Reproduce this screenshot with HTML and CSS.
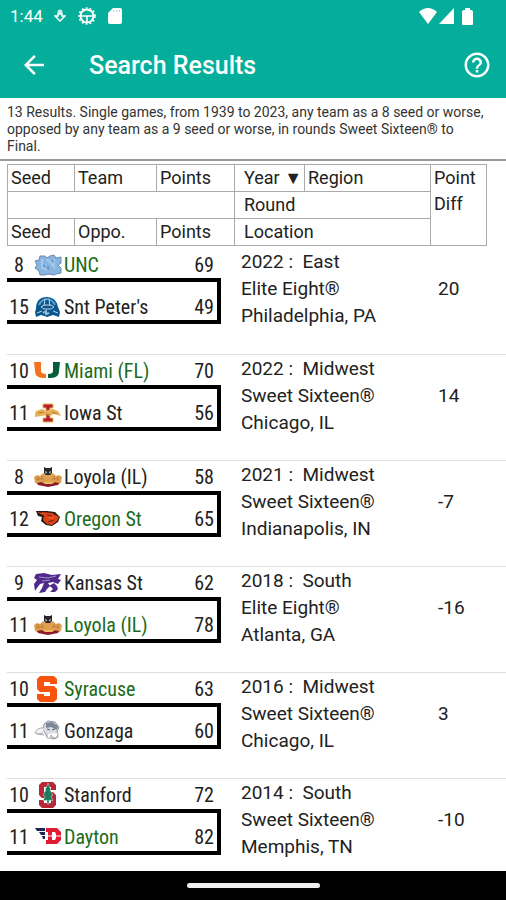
FILE: index.html
```html
<!DOCTYPE html>
<html lang="en">
<head>
    <meta charset="UTF-8">
    <meta name="viewport" content="width=device-width, initial-scale=1.0">
    <title>Search Results</title>
    <link rel="stylesheet" href="styles.css">
</head>
<body>
    <svg class="defs" aria-hidden="true">
        <symbol id="wolf" viewBox="0 0 28 26">
            <path d="M10 3l2 1h4l2-1v6l-2 3h-4l-2-3z" fill="#26262b"/>
            <path d="M11 7l2 1-1 2zM17 7l-2 1 1 2z" fill="#ddd"/>
            <path d="M0 13l3-2 3 1 3-3 3 2h4l3-2 3 3 3-1 3 2-1 6-4 2H6l-5-2z" fill="#dfa051"/>
            <path d="M2 15h8M18 15h7M4 12v5M8 12v3M20 12v3M24 12v5" stroke="#c07a38" fill="none"/>
            <path d="M3 19l5-1 6 1 6-1 5 1-1 2-10 2-10-2z" fill="#8c1c2c"/>
            <path d="M8 18h13l-3 2h-7z" fill="#eebb62"/>
        </symbol>
    </svg>

    <header>
        <div class="status">
            <span class="clock">1:44</span>
            <svg width="12" height="18" viewBox="0 0 12 18"><circle cx="6" cy="5" r="2.5" fill="#fff" opacity=".8"/><path d="M1 9l5 5 5-5H8V7H4v2z" fill="none" stroke="#fff" stroke-width="1.5"/></svg>
            <svg width="18" height="18" viewBox="0 0 18 18"><circle cx="9" cy="9" r="6.5" fill="none" stroke="#fff" stroke-width="2"/><circle cx="9" cy="9" r="8" fill="none" stroke="#fff" stroke-width="1.5" stroke-dasharray="2 2"/><path d="M3 9h12M9 9v7" stroke="#fff" stroke-width="1.6"/></svg>
            <svg width="14" height="16" viewBox="0 0 14 16"><path d="M5 0h7q2 0 2 2v12q0 2-2 2H2q-2 0-2-2V5z" fill="#fff"/><path d="M6 2v2M9 2v2M11.500 2v2" stroke="#9bdcd3"/></svg>
            <span class="space"></span>
            <svg class="wifi" width="18" height="16" viewBox="0 0 18 16"><path d="M0 4q9-8 18 0L9 16z" fill="#fff"/></svg>
            <svg class="signal" width="15" height="16" viewBox="0 0 15 16"><path d="M15 0v16H0z" fill="#fff"/></svg>
            <svg width="11" height="17" viewBox="0 0 11 17"><path d="M3 0h5v2h1q2 0 2 2v12q0 1-1 1H1q-1 0-1-1V4q0-2 2-2h1z" fill="#fff"/></svg>
        </div>
        <div class="bar">
            <button class="icon" aria-label="Back">
                <svg width="30" height="30" viewBox="0 0 24 24"><path d="M20 11H7.830l5.590-5.590L12 4l-8 8 8 8 1.410-1.410L7.830 13H20z" fill="#fff"/></svg>
            </button>
            <h1>Search Results</h1>
            <button class="icon" aria-label="Help">
                <svg width="30" height="30" viewBox="0 0 24 24"><path d="M11 18h2v-2h-2v2zm1-16C6.480 2 2 6.480 2 12s4.480 10 10 10 10-4.480 10-10S17.520 2 12 2zm0 18c-4.410 0-8-3.590-8-8s3.590-8 8-8 8 3.590 8 8-3.590 8-8 8zm0-14c-2.210 0-4 1.790-4 4h2c0-1.100.9-2 2-2s2 .9 2 2c0 2-3 1.750-3 5h2c0-2.250 3-2.500 3-5 0-2.210-1.790-4-4-4z" fill="#fff"/></svg>
            </button>
        </div>
    </header>

    <p class="summary">13 Results. Single games, from 1939 to 2023, any team as a 8 seed or worse, opposed by any team as a 9 seed or worse, in rounds Sweet Sixteen® to Final.</p>

    <main>
        <table class="legend">
            <colgroup><col class="c-seed"><col class="c-team"><col class="c-points"><col class="c-year"><col><col class="c-diff"></colgroup>
            <tr>
                <th>Seed</th><th>Team</th><th>Points</th>
                <th class="wide"><button class="sort">Year ▼</button></th><th>Region</th>
                <th rowspan="3" class="diff-head">Point Diff</th>
            </tr>
            <tr>
                <td colspan="3"></td><th colspan="2" class="wide">Round</th>
            </tr>
            <tr>
                <th>Seed</th><th>Oppo.</th><th>Points</th><th colspan="2" class="wide">Location</th>
            </tr>
        </table>

        <table class="games">
            <tr>
                <td class="match">
                    <div class="team win"><span class="seed">8</span>
                        <svg class="logo" viewBox="0 0 28 26"><path d="M1 9l4-1 1-4h5l2 2 3-2 4-1 2 3 5-1v6l-3 2 3 3v5l-5 1-2 1-6-1-3 1H6l-1-4-4-3 2-3z" fill="#86b5e3" stroke="#6f8aa8"/><path d="M8 7v9l6 2M13 7l7 8v-8" fill="none" stroke="#a2c7eb" stroke-width="2"/><path d="M9 13l2 2M14 14v4M18 8l2 2" stroke="#5a7490"/></svg>
                        <span class="name">UNC</span><span class="points">69</span></div>
                    <div class="team opponent"><span class="seed">15</span>
                        <svg class="logo" viewBox="0 0 28 26"><path d="M2 15q0-12 11-12 9 0 11 10l2 5-1 5-6-2-6 2-6-2-5 2-1-5z" fill="#0c568e"/><path d="M5 11q3-6 8-6t8 6" fill="none" stroke="#54a1cf" stroke-width="2"/><path d="M11 5l-1 7M15 5l1 7" stroke="#c5dce9"/><path d="M7 13l3-2h7l3 2-3 2h-7zM3 19l5-2M24 19l-5-2" stroke="#b9d2e3" fill="none"/><path d="M9 19l3-2v3l3-1" stroke="#8cbbd9" stroke-width="2" fill="none"/></svg>
                        <span class="name">Snt Peter's</span><span class="points">49</span></div>
                </td>
                <td class="info">2022 :&nbsp; East<br>Elite Eight®<br>Philadelphia, PA</td>
                <td class="diff">20</td>
            </tr>
            <tr>
                <td class="match">
                    <div class="team win"><span class="seed">10</span>
                        <svg class="logo" viewBox="0 0 28 26"><path d="M0 4h7v9q0 3 5 3v4H9q-8 0-8-7z" fill="#f47321"/><path d="M19 4h7l-1 9q0 7-8 7h-3v-4q5 0 5-3z" fill="#075c3b"/></svg>
                        <span class="name">Miami (FL)</span><span class="points">70</span></div>
                    <div class="team opponent"><span class="seed">11</span>
                        <svg class="logo" viewBox="0 0 28 26"><path d="M9 4h10v4h-3v10h3v4H9v-4h3V8H9z" fill="#b41f32" stroke="#e7b84c"/><path d="M1 14l1-3 6-2 4 2 2-1 5-1 5 2 3 5-7-2-4 2-3-1-6 1-6 1z" fill="#e5b257"/><path d="M4 13l6-1M18 12l5 2M12 14l4 1" stroke="#b77833"/></svg>
                        <span class="name">Iowa St</span><span class="points">56</span></div>
                </td>
                <td class="info">2022 :&nbsp; Midwest<br>Sweet Sixteen®<br>Chicago, IL</td>
                <td class="diff">14</td>
            </tr>
            <tr>
                <td class="match">
                    <div class="team"><span class="seed">8</span>
                        <svg class="logo"><use href="#wolf"/></svg>
                        <span class="name">Loyola (IL)</span><span class="points">58</span></div>
                    <div class="team opponent win"><span class="seed">12</span>
                        <svg class="logo" viewBox="0 0 28 26"><path d="M2 5l11 0 8 1 5 5-2 5-6 4-6-1-5-4 1-4-4-1z" fill="#2a1712"/><path d="M8 6l10 1 7 4-2 4-5 4-5-1-4-4 1-4z" fill="#dc4218"/><path d="M3 6l6 1v2zM13 12l5-2 3 2-4 1z" fill="#f05a22"/><path d="M13 9l5 1M14 16l6-2" stroke="#6a2211"/></svg>
                        <span class="name">Oregon St</span><span class="points">65</span></div>
                </td>
                <td class="info">2021 :&nbsp; Midwest<br>Sweet Sixteen®<br>Indianapolis, IN</td>
                <td class="diff">-7</td>
            </tr>
            <tr>
                <td class="match">
                    <div class="team"><span class="seed">9</span>
                        <svg class="logo" viewBox="0 0 28 26"><path d="M2 4l8-1 8 2 9-1-3 5 3 1-3 4-5-2-5 1 2 3-3 3-2 3-6 1 3-5 2-5-4 1-3 4-2 3-1-7 3-4-3-2z" fill="#4f2a8a"/><path d="M15 16l5-3 3 3 1 3-3 3h-5l3-3-2-2z" fill="#4f2a8a"/><path d="M5 7l9 1 8-2M8 11l8-1" fill="none" stroke="#b8a6d6" stroke-width=".8"/></svg>
                        <span class="name">Kansas St</span><span class="points">62</span></div>
                    <div class="team opponent win"><span class="seed">11</span>
                        <svg class="logo"><use href="#wolf"/></svg>
                        <span class="name">Loyola (IL)</span><span class="points">78</span></div>
                </td>
                <td class="info">2018 :&nbsp; South<br>Elite Eight®<br>Atlanta, GA</td>
                <td class="diff">-16</td>
            </tr>
            <tr>
                <td class="match">
                    <div class="team win"><span class="seed">10</span>
                        <svg class="logo" viewBox="0 0 28 26"><path d="M6 0h14l3 3v5h-7V6h-6v4h10l3 3v10l-3 3H6l-3-3v-5h7v2h6v-4H6l-3-3V3z" fill="#f9540d"/></svg>
                        <span class="name">Syracuse</span><span class="points">63</span></div>
                    <div class="team opponent"><span class="seed">11</span>
                        <svg class="logo" viewBox="0 0 28 26"><path d="M10 6l4-3 7 1 4 5-2 5 1 5-4 2-7-2-2-4-2-3z" fill="#dadce2" stroke="#8d929e"/><path d="M12 5l6-1 6 4-1 4-6-3-5 1z" fill="#7d8797"/><path d="M10 10q-7-1-9 5 3 2 8 0M3 16l7 1" fill="#f2f2f4" stroke="#aaaeb9"/><path d="M13 16v4q4 1 4-3l3 3q4 0 4-5" fill="#fff" stroke="#b5a3ad"/><path d="M13 11l3 1M18 12l3-1" stroke="#56617a"/></svg>
                        <span class="name">Gonzaga</span><span class="points">60</span></div>
                </td>
                <td class="info">2016 :&nbsp; Midwest<br>Sweet Sixteen®<br>Chicago, IL</td>
                <td class="diff">3</td>
            </tr>
            <tr>
                <td class="match">
                    <div class="team"><span class="seed">10</span>
                        <svg class="logo" viewBox="0 0 28 26"><path d="M8 0h11l3 3v5h-5V5h-7v5h9l3 3v10l-3 3H8l-3-3v-5h5v3h7v-5H8l-3-3V3z" fill="#b82638"/><path d="M14 1l2 5 1 1-1 1 3 5-2 1 2 5-4-1v4h-2v-4l-4 1 2-5-2-1 3-5-1-1 1-1z" fill="#1c7b59" stroke="#d5e5df" stroke-width=".5"/></svg>
                        <span class="name">Stanford</span><span class="points">72</span></div>
                    <div class="team opponent win"><span class="seed">11</span>
                        <svg class="logo" viewBox="0 0 28 26"><path d="M1 4h10v3H3zM5 8h6v3H7zM8 12h3v3H9z" fill="#1c2857"/><path d="M12 4h11l4 4v8l-4 4H12v-4h2V8h-2zM18 8v8h3l1-2v-4l-1-2z" fill="#e01b32" fill-rule="evenodd"/><path d="M13 12h5M22 12h5" stroke="#fff"/></svg>
                        <span class="name">Dayton</span><span class="points">82</span></div>
                </td>
                <td class="info">2014 :&nbsp; South<br>Sweet Sixteen®<br>Memphis, TN</td>
                <td class="diff">-10</td>
            </tr>
        </table>
    </main>

    <footer><div class="pill"></div></footer>
</body>
</html>
```
FILE: styles.css
```css
* {
    box-sizing: border-box;
}
body {
    font-family: Roboto, "Liberation Sans", sans-serif;
    background-color: #fff;
    color: #222;
    margin: 0;
    height: 100vh;
    display: flex;
    flex-direction: column;
    overflow: hidden;
}
.defs {
    display: none;
}
header {
    background-color: #05ae9a;
    color: #fff;
}
.status {
    display: flex;
    align-items: center;
    height: 32px;
    padding: 0 33px 0 10px;
}
.clock {
    font-size: 17px;
    margin-right: 11px;
}
.status svg {
    margin-right: 12px;
}
.status svg:last-child {
    margin-right: 0;
}
.space {
    flex: 1;
}
.status .wifi {
    margin-right: 2px;
}
.status .signal {
    margin-right: 8px;
}
.bar {
    display: flex;
    align-items: center;
    height: 66px;
    padding: 0 14px 0 19px;
}
.icon {
    display: flex;
    background: none;
    border: none;
    padding: 0;
    cursor: pointer;
}
h1 {
    flex: 1;
    margin: 0 0 0 40px;
    font-size: 25px;
    font-weight: 500;
}
.summary {
    margin: 0;
    padding: 6px 20px 4px 7px;
    border-bottom: 2px solid #999;
    font-size: 14px;
    line-height: 17px;
    color: #333;
}
main {
    flex: 1;
    min-height: 0;
    overflow: hidden;
    padding: 3px 0 0 7px;
}
table {
    border-collapse: collapse;
    table-layout: fixed;
}
.legend {
    width: calc(100% - 19px);
    font-size: 18px;
    line-height: 26px;
}
.legend th,
.legend td {
    height: 27px;
    padding: 0 3px;
    border: 1px solid #aaa;
    font-weight: 400;
    text-align: left;
    white-space: nowrap;
}
.legend .wide {
    padding-left: 9px;
}
.legend .diff-head {
    vertical-align: top;
    white-space: normal;
}
.c-seed {
    width: 67px;
}
.c-team {
    width: 82px;
}
.c-points {
    width: 78px;
}
.c-year {
    width: 70px;
}
.c-diff {
    width: 56px;
}
.sort {
    background: none;
    border: none;
    padding: 0;
    font: inherit;
    color: inherit;
    cursor: pointer;
}
.games {
    width: 100%;
    margin-top: 2px;
}
.games td {
    height: 106px;
    padding: 0;
    vertical-align: top;
}
.games tr + tr td {
    border-top: 1px solid #ddd;
}
.games .match {
    width: 214px;
    font-family: "Roboto Condensed", "Liberation Sans Narrow", Roboto, sans-serif;
    font-size: 20px;
}
.team {
    display: flex;
    align-items: center;
    height: 30px;
    padding: 3px 7px 0 0;
}
.opponent {
    height: 46px;
    padding: 11px 3px 0 0;
    border: 4px solid #000;
    border-left: none;
}
.win .name {
    color: #1b6b1b;
}
.seed {
    width: 24px;
    text-align: center;
}
.logo {
    width: 28px;
    height: 26px;
    margin: 0 2px 0 3px;
}
.name {
    flex: 1;
    white-space: nowrap;
}
.games .info {
    padding-left: 20px;
    font-size: 19px;
    line-height: 27px;
}
.games .diff {
    width: 68px;
    font-size: 19px;
    line-height: 27px;
    padding-top: 27px;
}
footer {
    display: flex;
    flex-shrink: 0;
    justify-content: center;
    align-items: center;
    height: 29px;
    background-color: #000;
}
.pill {
    width: 133px;
    height: 5px;
    border-radius: 3px;
    background-color: #eee;
}
```
